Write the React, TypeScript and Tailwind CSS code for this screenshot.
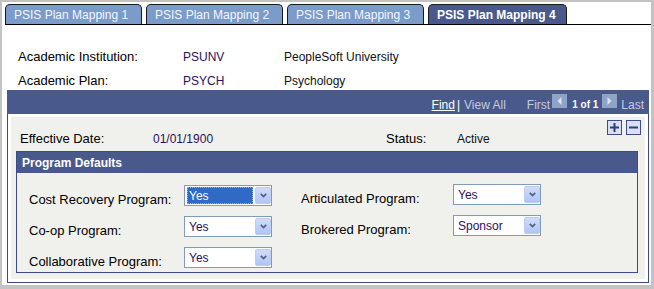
import React from "react";

const tabs = ["PSIS Plan Mapping 1", "PSIS Plan Mapping 2", "PSIS Plan Mapping 3", "PSIS Plan Mapping 4"];

const Chevron = () => (
	<svg width="7" height="5" viewBox="0 0 7 5">
		<path d="M0.8 0.8 L3.5 3.6 L6.2 0.8" fill="none" stroke="#4d6185" strokeWidth="1.7" />
	</svg>
);

const Select = ({ value, focused }: { value: string; focused?: boolean }) => (
	<div className="flex h-[21px] w-[88px] border border-[#7f9db9] bg-white py-[1px] pl-[2px]">
		<div className="flex flex-1">
			{focused ? (
				<div className="mr-[2px] flex flex-1 items-center border border-dotted border-[#e0a838] bg-[#316ac5] pl-[1px] text-white">
					{value}
				</div>
			) : (
				<div className="flex flex-1 items-center pl-[2px] text-[#2b1060]">{value}</div>
			)}
		</div>
		<div className="flex w-[16px] items-center justify-center rounded-[2px] border border-[#bccbf2] bg-gradient-to-b from-[#d0dcfc] to-[#b0c4f4]">
			<Chevron />
		</div>
	</div>
);

const NavArrow = ({ dir }: { dir: "l" | "r" }) => (
	<svg width="15" height="14" viewBox="0 0 15 14" className="mb-[4px]">
		<rect width="15" height="14" fill="#8ea3c6" />
		<path d={dir === "l" ? "M9.5 3 L5.5 7 L9.5 11 Z" : "M5.5 3 L9.5 7 L5.5 11 Z"} fill="#dbe3f0" />
	</svg>
);

const RowButton = ({ minus }: { minus?: boolean }) => (
	<div className="flex h-[15px] w-[15px] items-center justify-center border border-[#3e4d88] bg-[#d9e0f5]">
		<svg width="11" height="11" viewBox="0 0 11 11">
			<rect x="1" y="4.5" width="9" height="2" fill="#2f3d78" />
			{!minus && <rect x="4.5" y="1" width="2" height="9" fill="#2f3d78" />}
		</svg>
	</div>
);

const Field = ({ label, value, focused }: { label: string; value: string; focused?: boolean }) => (
	<div className="flex">
		<div className="w-[var(--lw)] pt-[8px] text-[13px] text-black">{label}</div>
		<Select value={value} focused={focused} />
	</div>
);

export default function App() {
	return (
		<div className="h-[289px] w-[654px] bg-[#c3c3c3] pl-[2px] pt-[2px] font-['Liberation_Sans',Arial,sans-serif] text-[12px] leading-[14px]">
			<div className="flex h-[283px] w-[649px] flex-col bg-white">
				{/* tabs */}
				<div className="ml-[3px] flex items-end gap-[4px] border-b border-black pt-[2px]">
					{tabs.map((t, i) => {
						const active = i === 3;
						return (
							<div
								key={t}
								className={
									active
										? "h-[20px] w-[139px] rounded-t-[5px] border border-b-0 border-[#1a1a1a] bg-[#4a598b] pl-[8px] pt-[3px] font-bold text-white"
										: "h-[20px] w-[137px] rounded-t-[5px] border border-b-0 border-[#1a1a1a] bg-[#7b9bc9] pl-[8px] pt-[3px] text-[#f4f7fc]"
								}
							>
								{t}
							</div>
						);
					})}
				</div>

				{/* key fields */}
				<div className="ml-[16px] mt-[25px] grid grid-cols-[165px_101px_1fr] gap-y-[10px]">
					<div className="text-[13px] text-black">Academic Institution:</div>
					<div className="text-[#2b1060]">PSUNV</div>
					<div className="text-[#111]">PeopleSoft University</div>
					<div className="text-[13px] text-black">Academic Plan:</div>
					<div className="text-[#2b1060]">PSYCH</div>
					<div className="text-[#111]">Psychology</div>
				</div>

				{/* scroll area */}
				<div className="ml-[5px] mt-[2px] w-[642px]">
					<div className="flex h-[24px] items-end justify-end bg-[#4a598b] pb-[2px] pr-[5px] text-[#c4cbdb]">
						<span className="text-white underline">Find</span>
						<span className="ml-[2px] text-white">|</span>
						<span className="ml-[4px]">View All</span>
						<span className="ml-[21px]">First</span>
						<span className="ml-[2px]">
							<NavArrow dir="l" />
						</span>
						<span className="ml-[5px] text-[10px] font-bold text-white">1 of 1</span>
						<span className="ml-[4px]">
							<NavArrow dir="r" />
						</span>
						<span className="ml-[4px]">Last</span>
					</div>
					<div className="border-x border-b border-[#3c4a87] p-[3px]">
						<div className="flex h-[162px] flex-col bg-[#f0f1ec]">
							<div className="flex">
								<div className="grid grid-cols-[133px_233px_71px_auto] pl-[9px] pt-[15px]">
									<div className="text-[13px] text-black">Effective Date:</div>
									<div className="text-[#2b1060]">01/01/1900</div>
									<div className="text-[13px] text-black">Status:</div>
									<div className="text-[#111]">Active</div>
								</div>
								<div className="ml-auto mr-[4px] mt-[3px] flex gap-[4px]">
									<RowButton />
									<RowButton minus />
								</div>
							</div>

							<div className="ml-[5px] mt-[5px] w-[622px] border border-[#3c4a87]">
								<div className="flex h-[21px] items-center bg-[#4a598b] pl-[5px] font-bold text-white">Program Defaults</div>
								<div className="flex pb-[3px]">
									<div className="flex flex-col gap-[9px] pl-[12px] pt-[12px] [--lw:155px]">
										<Field label="Cost Recovery Program:" value="Yes" focused />
										<Field label="Co-op Program:" value="Yes" />
										<Field label="Collaborative Program:" value="Yes" />
									</div>
									<div className="ml-[29px] flex flex-col gap-[9px] pt-[11px] [--lw:152px]">
										<Field label="Articulated Program:" value="Yes" />
										<Field label="Brokered Program:" value="Sponsor" />
									</div>
								</div>
							</div>
						</div>
					</div>
				</div>
			</div>
		</div>
	);
}
